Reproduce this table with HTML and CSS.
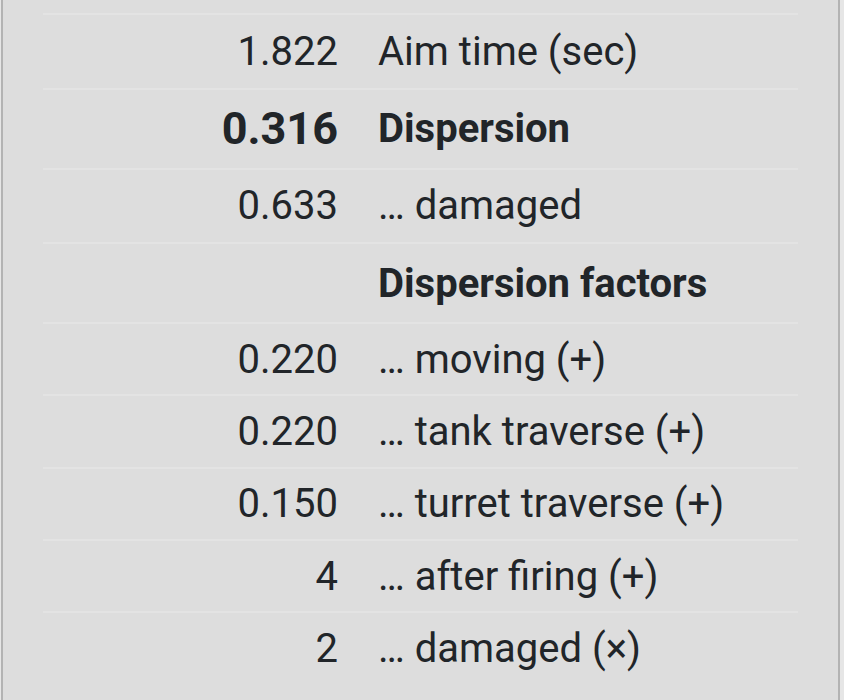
FILE: index.html
```html
<!DOCTYPE html>
<html lang="en">
<head>
<meta charset="utf-8">
<title>Dispersion</title>
<link rel="stylesheet" href="styles.css">
</head>
<body>
<div class="panel">
  <div class="stats">
    <div class="row lead"><span class="num">1.822</span><span class="label">Aim time (sec)</span></div>
    <div class="row head"><span class="num big">0.316</span><span class="label">Dispersion</span></div>
    <div class="row lead"><span class="num">0.633</span><span class="label">… damaged</span></div>
    <div class="row head"><span class="num"></span><span class="label">Dispersion factors</span></div>
    <div class="row"><span class="num">0.220</span><span class="label">… moving (+)</span></div>
    <div class="row"><span class="num">0.220</span><span class="label">… tank traverse (+)</span></div>
    <div class="row"><span class="num">0.150</span><span class="label">… turret traverse (+)</span></div>
    <div class="row"><span class="num">4</span><span class="label">… after firing (+)</span></div>
    <div class="row"><span class="num">2</span><span class="label">… damaged (×)</span></div>
  </div>
</div>
</body>
</html>
```
FILE: styles.css
```css
html, body {
  margin: 0;
  padding: 0;
  background: #e6e6e6;
  height: 100%;
  overflow: hidden;
}
.panel {
  margin-left: 1px;
  width: 839px;
  height: 700px;
  box-sizing: border-box;
  background: #dddddd;
  border-left: 2px solid #b3b3b3;
  border-right: 2px solid #b3b3b3;
  padding: 13px 40px 0 40px;
  font-family: Roboto, "Noto Sans", sans-serif;
  font-size: 40px;
  color: #212529;
}
.row {
  display: grid;
  grid-template-columns: 314px 1fr;
  align-items: center;
  height: 72.3px;
  box-sizing: border-box;
  border-top: 2px solid #e3e3e3;
}
.row.lead { height: 74.5px; }
.row.head { height: 80px; font-weight: 700; }
.num {
  text-align: right;
  padding-right: 19px;
}
.num.big {
  font-size: 45px;
}
.label {
  padding-left: 21px;
  white-space: nowrap;
}
```
